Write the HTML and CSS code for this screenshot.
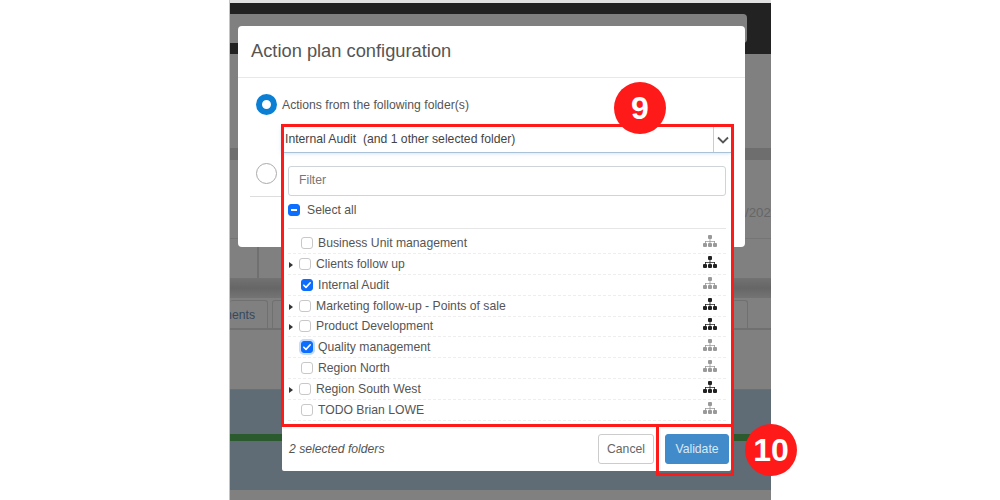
FILE: index.html
```html
<!DOCTYPE html>
<html lang="en">
<head>
<meta charset="utf-8">
<title>Action plan configuration</title>
<link rel="stylesheet" href="styles.css">
</head>
<body>
<svg class="defs" width="0" height="0" aria-hidden="true">
  <symbol id="tree" viewBox="0 0 14 12">
    <rect x="5" y="0" width="4" height="4" rx="1"/>
    <path d="M6.6 4h.8v2H12v2h-.8V6.8H7.4V8h-.8V6.8H2.8V8H2V6h4.6z"/>
    <rect x="0" y="8" width="4" height="4" rx="1"/>
    <rect x="5" y="8" width="4" height="4" rx="1"/>
    <rect x="10" y="8" width="4" height="4" rx="1"/>
  </symbol>
  <symbol id="check" viewBox="0 0 12 12">
    <path d="M2.8 6.2l2.2 2.2 4.2-4.6" fill="none" stroke="#fff" stroke-width="1.6" stroke-linecap="round" stroke-linejoin="round"/>
  </symbol>
</svg>
<main class="stage">
  <div class="backdrop">
    <div class="strip"></div>
    <div class="topbar"><div class="topbar-panel"></div></div>
    <div class="gap-a"></div>
    <div class="band"></div>
    <div class="section">
      <div class="date">/202</div>
      <div class="cells"><div class="cell cell-a"></div><div class="cell cell-b"></div></div>
    </div>
    <div class="band-grad"></div>
    <div class="tabs">
      <div class="tab tab-first"><span>Documents</span></div>
      <div class="tab tab-second"></div>
      <div class="tab tab-last"></div>
    </div>
    <div class="gap-b"></div>
    <div class="blue"><div class="green"></div></div>
    <div class="tail"></div>
  </div>

  <section class="modal">
    <h1 class="modal-title">Action plan configuration</h1>
    <div class="modal-body">
      <div class="radio-row">
        <span class="radio radio-on"></span>
        <span class="radio-label">Actions from the following folder(s)</span>
      </div>
      <div class="radio-row radio-row-2">
        <span class="radio"></span>
      </div>
      <div class="modal-rule"></div>
    </div>
  </section>

  <section class="picker">
    <div class="toggle">
      <span class="toggle-text">Internal Audit&nbsp; (and 1 other selected folder)</span>
      <span class="toggle-btn">
        <svg width="12" height="8" viewBox="0 0 12 8"><path d="M1 1.5l5 5 5-5" fill="none" stroke="#555" stroke-width="1.8"/></svg>
      </span>
    </div>
    <div class="picker-body">
      <div class="filter">Filter</div>
      <div class="select-all">
        <span class="cb cb-on"><span class="minus"></span></span>
        <span>Select all</span>
      </div>
      <div class="rule"></div>
      <ul class="list">
        <li class="row"><span class="cb"></span><span class="name">Business Unit management</span><svg class="tree tree-off"><use href="#tree"/></svg></li>
        <li class="row row-parent"><span class="arrow"></span><span class="cb"></span><span class="name">Clients follow up</span><svg class="tree"><use href="#tree"/></svg></li>
        <li class="row"><span class="cb cb-on"><svg width="12" height="12"><use href="#check"/></svg></span><span class="name">Internal Audit</span><svg class="tree tree-off"><use href="#tree"/></svg></li>
        <li class="row row-parent"><span class="arrow"></span><span class="cb"></span><span class="name">Marketing follow-up - Points of sale</span><svg class="tree"><use href="#tree"/></svg></li>
        <li class="row row-parent"><span class="arrow"></span><span class="cb"></span><span class="name">Product Development</span><svg class="tree"><use href="#tree"/></svg></li>
        <li class="row"><span class="cb cb-on cb-focus"><svg width="12" height="12"><use href="#check"/></svg></span><span class="name">Quality management</span><svg class="tree tree-off"><use href="#tree"/></svg></li>
        <li class="row"><span class="cb"></span><span class="name">Region North</span><svg class="tree tree-off"><use href="#tree"/></svg></li>
        <li class="row row-parent"><span class="arrow"></span><span class="cb"></span><span class="name">Region South West</span><svg class="tree"><use href="#tree"/></svg></li>
        <li class="row"><span class="cb"></span><span class="name">TODO Brian LOWE</span><svg class="tree tree-off"><use href="#tree"/></svg></li>
      </ul>
    </div>
    <div class="footer">
      <em class="count">2 selected folders</em>
      <span class="btn btn-cancel">Cancel</span>
      <span class="btn btn-validate">Validate</span>
    </div>
  </section>

  <div class="mark mark-list"></div>
  <div class="mark mark-validate"></div>
  <div class="badge badge-9">9</div>
  <div class="badge badge-10">10</div>
</main>
</body>
</html>
```
FILE: styles.css
```css
* { box-sizing: border-box; }
html, body { margin: 0; padding: 0; background: #fff; }
body {
  display: flex;
  justify-content: center;
  height: 500px;
  overflow: hidden;
  font-family: "Liberation Sans", Arial, sans-serif;
  font-size: 12.2px;
  color: #555;
}
.defs { position: absolute; }
.stage {
  position: relative;
  width: 542px;
  height: 500px;
  flex: none;
}

/* dimmed page behind the dialog */
.backdrop { display: flex; flex-direction: column; height: 500px; overflow: hidden; background: #808080; border-left: 1px solid #c4c4c4; }
.strip { height: 3px; background: #e2e2e2; }
.topbar { height: 51px; background: #222; padding-top: 11px; }
.topbar-panel { width: 517px; height: 29px; background: #808080; border-radius: 0 4px 4px 0; }
.gap-a { height: 94px; }
.band { height: 12px; background: #6e6e6e; }
.section { height: 118px; display: flex; flex-direction: column; }
.date { padding: 45px 0 0 515px; white-space: nowrap; font-size: 13.3px; line-height: 16px; color: #666; }
.cells { margin-top: auto; height: 40px; display: flex; border-top: 1px solid #757575; }
.cell { height: 39px; border-right: 2px solid #707070; }
.cell-a { width: 29px; }
.cell-b { flex: 1; border-right: 0; }
.band-grad { height: 20px; background: linear-gradient(#727272, #666 50%, #747474); }
.tabs { height: 32px; display: flex; padding-top: 2px; border-bottom: 2px solid #707070; }
.tab { height: 28px; border: 1px solid #707070; border-bottom: 0; border-radius: 3px 3px 0 0; }
.tab-first {
  width: 38px;
  margin-right: 4px;
  border-left: 0;
  display: flex;
  justify-content: flex-end;
  overflow: hidden;
  padding-right: 12px;
  line-height: 28px;
  color: #34495e;
  white-space: nowrap;
}
.tab-second { width: 120px; }
.tab-last { width: 60px; margin-left: auto; margin-right: 23px; }
.gap-b { height: 60px; }
.blue { height: 100px; background: #5f6b75; padding-top: 44px; box-shadow: 0 -1px 0 #6b6f73; }
.green { height: 7px; background: #2b5a2e; }
.tail { height: 10px; }

/* dialog */
.modal {
  position: absolute;
  left: 9px;
  top: 26px;
  width: 507px;
  height: 221px;
  background: #fff;
  border-radius: 4px;
}
.modal-title {
  margin: 0;
  height: 52px;
  padding: 0 13px;
  font-size: 18.3px;
  font-weight: 400;
  line-height: 50px;
  color: #555;
  border-bottom: 1px solid #e8e8e8;
}
.modal-body { padding: 16px 12px 0; }
.radio-row { display: flex; align-items: center; height: 21px; padding-left: 6px; }
.radio-row-2 { margin-top: 48px; }
.radio { width: 21px; height: 21px; border-radius: 50%; border: 1px solid #aaa; background: #fff; }
.radio-on { border: 6.5px solid #0b7fd4; }
.radio-label { margin-left: 5px; line-height: 20px; }
.modal-rule { margin-top: 12px; border-top: 1px solid #ddd; }

/* folder picker */
.picker {
  position: absolute;
  left: 53px;
  top: 127px;
  width: 449px;
  height: 344px;
  background: #fff;
  display: flex;
  flex-direction: column;
  border-radius: 0 0 2px 2px;
}
.toggle {
  height: 26px;
  display: flex;
  align-items: center;
  border-bottom: 1px solid #a9c2d8;
  box-shadow: 0 0 4px rgba(140, 180, 220, .5);
  flex: none;
}
.toggle-text { flex: 1; padding: 0 0 2px 3px; color: #444; }
.toggle-btn { width: 18px; height: 25px; border-left: 1px solid #ccc; display: flex; align-items: center; justify-content: center; }
.picker-body { padding: 13px 5px 0 6px; }
.filter {
  height: 30px;
  padding-left: 10px;
  line-height: 26px;
  border: 1px solid #ced4da;
  border-radius: 3px;
  color: #777;
}
.select-all { display: flex; align-items: center; gap: 7px; height: 12px; margin-top: 8px; }
.rule { margin-top: 12px; border-top: 1px solid #e6e6e6; }
.list { list-style: none; margin: 4.4px 0 0; padding: 0; }
.row {
  height: 20.8px;
  display: flex;
  align-items: center;
  padding-left: 13px;
  border-bottom: 1px dashed #eee;
}
.row-parent { padding-left: 1px; }
.arrow {
  width: 0;
  height: 0;
  margin-right: 6px;
  margin-top: 2px;
  border-left: 4px solid #333;
  border-top: 3.5px solid transparent;
  border-bottom: 3.5px solid transparent;
}
.cb {
  flex: none;
  width: 12px;
  height: 12px;
  border: 1px solid #c8c8c8;
  border-radius: 3px;
  background: #fff;
  display: flex;
  align-items: center;
  justify-content: center;
}
.cb-on { background: #0d6efd; border-color: #0d6efd; }
.cb-on svg { flex: none; }
.cb-focus { box-shadow: 0 0 0 2px rgba(13, 110, 253, .25); }
.minus { width: 6px; height: 2px; background: #fff; }
.name { flex: 1; margin-left: 5px; }
.tree { width: 14px; height: 12px; margin: -4px 9px 0 0; fill: #222; flex: none; }
.tree-off { fill: #999; }

.footer { margin-top: auto; height: 44px; flex: none; display: flex; align-items: center; padding: 0 2px 0 7px; }
.count { flex: 1; color: #555; }
.btn { height: 30px; line-height: 28px; text-align: center; border-radius: 3px; border: 1px solid #ccc; }
.btn-cancel { width: 56px; color: #666; margin-right: 11px; }
.btn-validate { width: 64px; color: #dbe9f5; background: #428bca; border-color: #428bca; }

/* annotations */
.mark { position: absolute; border: 3px solid #ff1a1a; }
.mark-list { left: 52px; top: 124px; width: 453px; height: 303px; }
.mark-validate { left: 427px; top: 424px; width: 78px; height: 52px; }
.badge {
  position: absolute;
  width: 52px;
  height: 52px;
  border-radius: 50%;
  background: #ff1a1a;
  color: #fff;
  font-size: 32px;
  font-weight: 700;
  line-height: 52px;
  text-align: center;
}
.badge-9 { left: 385px; top: 82px; }
.badge-10 { left: 516px; top: 424px; }
```
